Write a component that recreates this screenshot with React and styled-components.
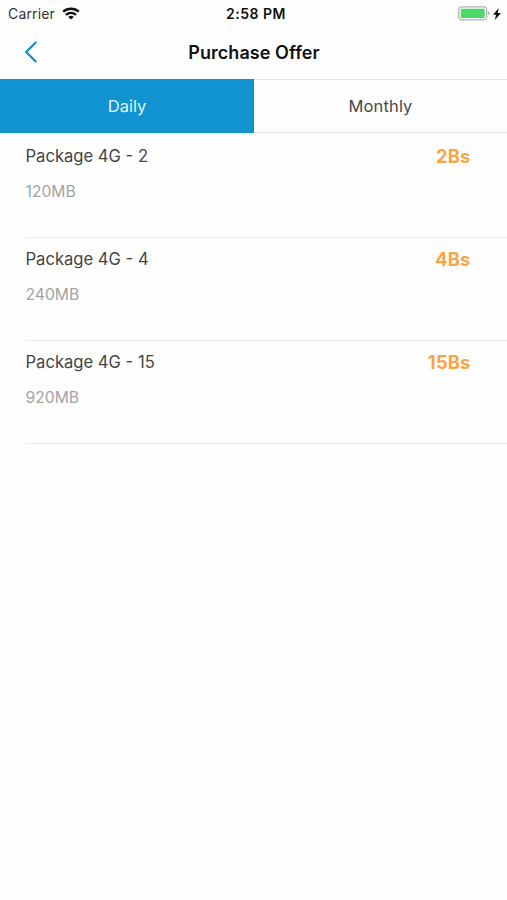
import React, { useState } from 'react';
import styled, { createGlobalStyle } from 'styled-components';

const GlobalStyle = createGlobalStyle`
  body {
    margin: 0;
    background-color: #fefefe;
    font-family: Inter, 'Liberation Sans', sans-serif;
  }
`;

const Screen = styled.div`
  min-height: 100vh;
  display: flex;
  flex-direction: column;
  background-color: #fefefe;
`;

const StatusBar = styled.div`
  height: 27px;
  padding: 0 6px 0 8px;
  display: grid;
  grid-template-columns: 1fr auto 1fr;
  align-items: center;
  color: #111;
`;

const StatusGroup = styled.div`
  display: flex;
  align-items: center;
  justify-content: ${(props) => (props.$end ? 'flex-end' : 'flex-start')};
  gap: ${(props) => (props.$end ? '3px' : '7px')};
`;

const Carrier = styled.span`
  font-size: 14px;
  line-height: 27px;
  letter-spacing: 0.15px;
  color: #333;
`;

const Clock = styled.span`
  padding-left: 3px;
  font-size: 14px;
  font-weight: 600;
  line-height: 27px;
  letter-spacing: 0.5px;
`;

const Header = styled.header`
  height: 52px;
  display: grid;
  grid-template-columns: 60px 1fr 60px;
  align-items: center;
`;

const BackButton = styled.button`
  display: flex;
  padding: 0 0 2px 24px;
  border: none;
  background: none;
  cursor: pointer;
`;

const Title = styled.h1`
  margin: 0;
  padding-left: 1px;
  font-size: 18px;
  font-weight: 600;
  line-height: 50px;
  letter-spacing: 0.05px;
  text-align: center;
  color: #111;
`;

const Tabs = styled.div`
  display: flex;
  height: 54px;
`;

const Tab = styled.button`
  flex: ${(props) => (props.$active ? '0 0 254px' : '1')};
  box-sizing: border-box;
  padding: 0;
  border: none;
  border-top: 1px solid ${(props) => (props.$active ? '#1293d1' : '#e8e8e8')};
  border-bottom: 1px solid ${(props) => (props.$active ? '#1293d1' : '#dedede')};
  background-color: ${(props) => (props.$active ? '#1193d1' : '#fefefe')};
  color: ${(props) => (props.$active ? '#e5f4fb' : '#484848')};
  font-family: inherit;
  font-size: 16.5px;
  letter-spacing: ${(props) => (props.$active ? '0' : '0.15px')};
  cursor: pointer;
`;

const List = styled.ul`
  margin: 0;
  padding: 0 0 0 25.5px;
  list-style: none;
`;

const Item = styled.li`
  box-sizing: border-box;
  height: ${(props) => (props.$first ? '105px' : '103px')};
  padding: ${(props) => (props.$first ? '13px' : '11px')} 36.5px 0 0;
  display: flex;
  justify-content: space-between;
  align-items: flex-start;
  border-bottom: 1px solid #ececec;
`;

const PackageName = styled.div`
  font-size: 16.6px;
  line-height: 20px;
  color: #444;
`;

const PackageSize = styled.div`
  margin-top: 16px;
  font-size: 15.7px;
  line-height: 20px;
  color: #a3a3a3;
`;

const Price = styled.span`
  font-size: 18.3px;
  font-weight: 700;
  line-height: 20px;
  letter-spacing: 0.2px;
  color: #faa442;
`;

const WifiIcon = () => (
  <svg width="18" height="13" viewBox="0 0 18 13" fill="none" stroke="#111" strokeWidth="2.5">
    <path d="M1.2 4.6C5.7 0.7 12.3 0.7 16.8 4.6" />
    <path d="M4 7.9C6.9 5.3 11.1 5.3 14 7.9" />
    <path d="M6.2 9.9C7.9 8.5 10.1 8.5 11.8 9.9L9 12.6Z" fill="#111" stroke="none" />
  </svg>
);

const BatteryIcon = () => (
  <svg width="32" height="15" viewBox="0 0 32 15">
    <rect x="0.7" y="0.8" width="28" height="13" rx="3.4" fill="#fff" stroke="#b4b4b4" strokeWidth="1.3" />
    <rect x="2.7" y="2.7" width="24" height="9.2" rx="1.2" fill="#4bd866" />
    <path d="M30 5.2C31.8 5.8 31.8 8.8 30 9.4Z" fill="#aaa" />
  </svg>
);

const BoltIcon = () => (
  <svg width="8" height="12" viewBox="0 0 8 12">
    <path d="M5.7 0L0 6.8H3L1.9 12L8 5H4.7Z" fill="#111" />
  </svg>
);

const BackIcon = () => (
  <svg width="14" height="22" viewBox="0 0 14 22" fill="none" stroke="#1690cd" strokeWidth="2.3">
    <path d="M12.2 1L2.2 11L12.2 21" />
  </svg>
);

const offers = {
  Daily: [
    { name: 'Package 4G - 2', size: '120MB', price: '2Bs' },
    { name: 'Package 4G - 4', size: '240MB', price: '4Bs' },
    { name: 'Package 4G - 15', size: '920MB', price: '15Bs' },
  ],
  Monthly: [],
};

const PurchaseOffer = () => {
  const [activeTab, setActiveTab] = useState('Daily');

  return (
    <Screen>
      <GlobalStyle />
      <StatusBar>
        <StatusGroup>
          <Carrier>Carrier</Carrier>
          <WifiIcon />
        </StatusGroup>
        <Clock>2:58 PM</Clock>
        <StatusGroup $end>
          <BatteryIcon />
          <BoltIcon />
        </StatusGroup>
      </StatusBar>
      <Header>
        <BackButton aria-label="Back">
          <BackIcon />
        </BackButton>
        <Title>Purchase Offer</Title>
      </Header>
      <Tabs>
        {Object.keys(offers).map((tab) => (
          <Tab key={tab} $active={tab === activeTab} onClick={() => setActiveTab(tab)}>
            {tab}
          </Tab>
        ))}
      </Tabs>
      <List>
        {offers[activeTab].map((offer, index) => (
          <Item key={offer.name} $first={index === 0}>
            <div>
              <PackageName>{offer.name}</PackageName>
              <PackageSize>{offer.size}</PackageSize>
            </div>
            <Price>{offer.price}</Price>
          </Item>
        ))}
      </List>
    </Screen>
  );
};

export default PurchaseOffer;
